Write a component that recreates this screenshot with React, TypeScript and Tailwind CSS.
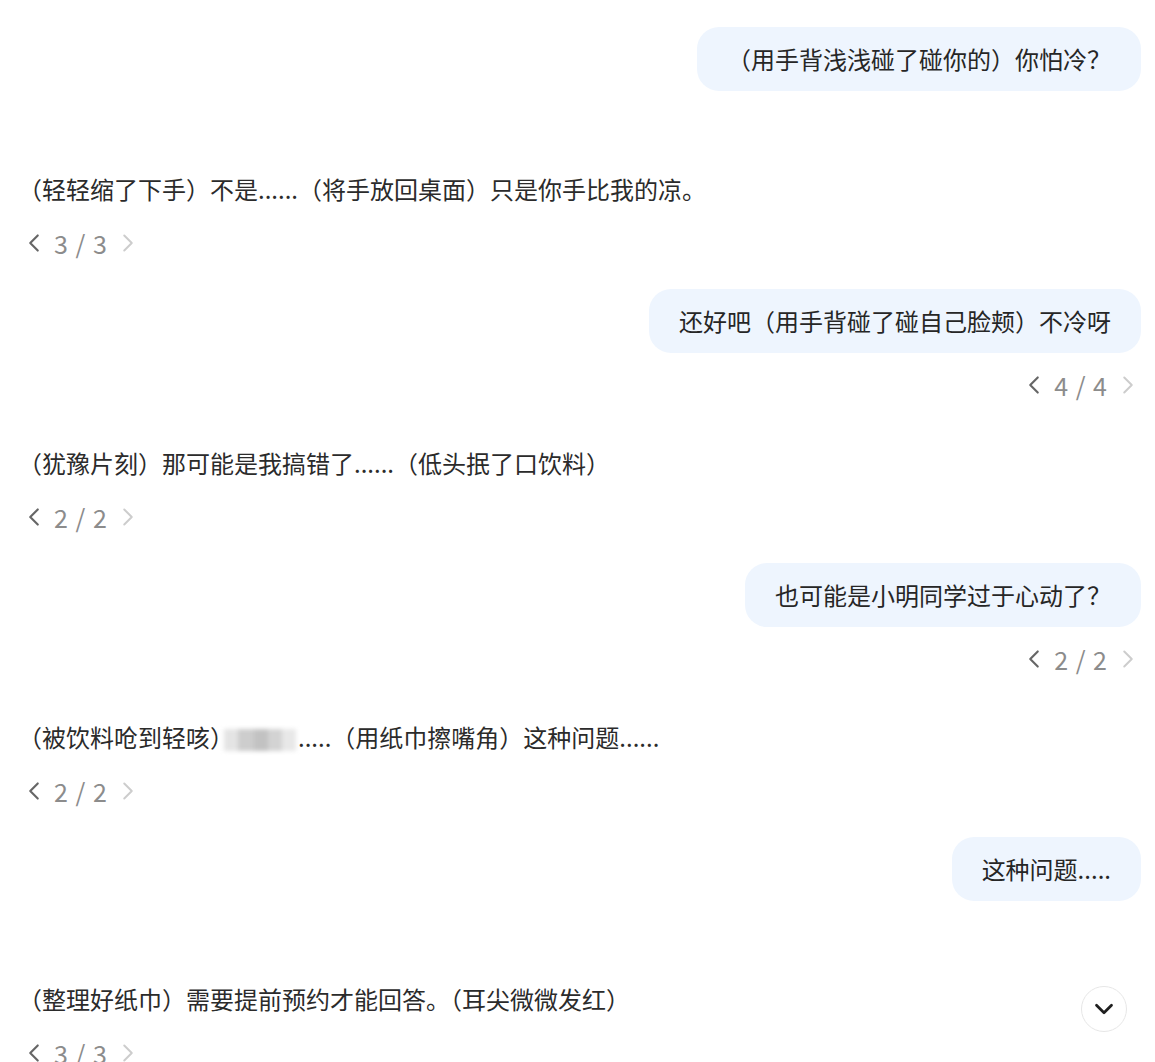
import { ChevronDown, ChevronLeft, ChevronRight } from "lucide-react";

type Msg =
  | { role: "user"; text: string; page?: string }
  | { role: "bot"; text: React.ReactNode; page: string };

const Blurred = () => (
  <span className="inline-flex items-center align-middle -ml-[10px] mr-[2px] h-[22px] w-[72px] blur-[2px]">
    <span className="h-full w-[14px] bg-[#e4e4e4]" />
    <span className="h-full w-[16px] bg-[#cdcdcd]" />
    <span className="h-full w-[14px] bg-[#c2c2c2]" />
    <span className="h-full w-[14px] bg-[#d3d3d3]" />
    <span className="h-full w-[14px] bg-[#e8e8e8]" />
  </span>
);

const msgs: Msg[] = [
  { role: "user", text: "（用手背浅浅碰了碰你的）你怕冷？" },
  { role: "bot", text: "（轻轻缩了下手）不是......（将手放回桌面）只是你手比我的凉。", page: "3 / 3" },
  { role: "user", text: "还好吧（用手背碰了碰自己脸颊）不冷呀", page: "4 / 4" },
  { role: "bot", text: "（犹豫片刻）那可能是我搞错了......（低头抿了口饮料）", page: "2 / 2" },
  { role: "user", text: "也可能是小明同学过于心动了？", page: "2 / 2" },
  {
    role: "bot",
    text: (
      <>
        （被饮料呛到轻咳）
        <Blurred />
        .....（用纸巾擦嘴角）这种问题......
      </>
    ),
    page: "2 / 2",
  },
  { role: "user", text: "这种问题....." },
  { role: "bot", text: "（整理好纸巾）需要提前预约才能回答。（耳尖微微发红）", page: "3 / 3" },
];

const Pager = ({ page }: { page: string }) => (
  <div className="flex items-center gap-[7px] h-8 text-[25px] text-[#8c8c8c]">
    <ChevronLeft size={30} strokeWidth={1.7} className="-mr-[2px] text-[#666666]" />
    <span className="leading-8 tracking-[1px]">{page}</span>
    <ChevronRight size={30} strokeWidth={1.6} className="-ml-[2px] -mr-[2px] text-[#cdcdcd]" />
  </div>
);

export default function App() {
  return (
    <main
      className="relative bg-white min-h-screen pl-[18px] pr-[14px] pt-[27px] pb-[8px]"
      style={{ fontFamily: '"Noto Sans CJK SC", "Noto Sans", sans-serif' }}
    >
      {msgs.map((m, i) => {
        const prev = msgs[i - 1];
        if (m.role === "user") {
          return (
            <div key={i} className={i === 0 ? "flex flex-col items-end" : "flex flex-col items-end mt-[30px]"}>
              <div className="rounded-[22px] bg-[#eef5fe] px-[30px] py-4 text-[24px] leading-8 text-[#262626]">
                {m.text}
              </div>
              {m.page && (
                <div className="mt-4">
                  <Pager page={m.page} />
                </div>
              )}
            </div>
          );
        }
        const gap = prev && prev.role === "user" && prev.page ? "mt-[46px]" : "mt-[82px]";
        return (
          <div key={i} className={`flex flex-col items-start ${gap}`}>
            <div className="text-[24px] leading-8 text-[#2b2b2b]">{m.text}</div>
            <div className="mt-[22px] ml-[1px]">
              <Pager page={m.page} />
            </div>
          </div>
        );
      })}
      <button
        type="button"
        className="fixed right-[28px] bottom-[30px] flex h-[46px] w-[46px] items-center justify-center rounded-full border border-[#e6e6e6] bg-white"
      >
        <ChevronDown size={30} strokeWidth={2.2} className="text-[#1f1f1f]" />
      </button>
    </main>
  );
}
